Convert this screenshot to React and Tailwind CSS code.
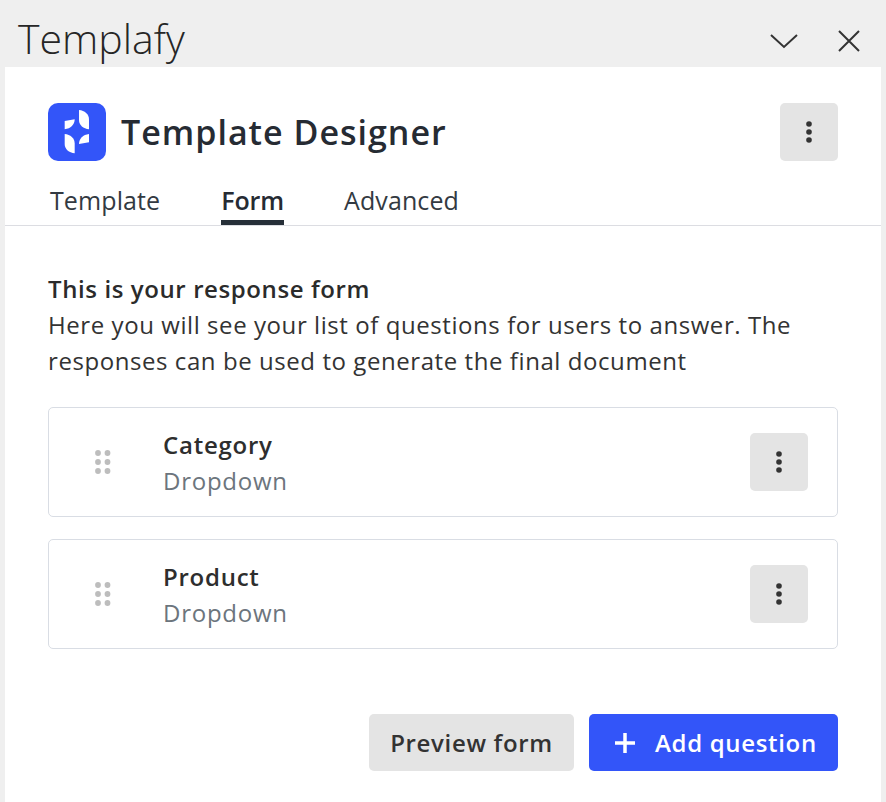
import React from "react";

const sans = "font-['Open_Sans',sans-serif]";

function Kebab() {
  return (
    <button className="w-[58px] h-[58px] rounded-[5px] bg-[#e4e4e4] flex items-center justify-center shrink-0">
      <svg width="8" height="24" viewBox="0 0 8 24" fill="#333">
        <circle cx="4" cy="4" r="2.8" />
        <circle cx="4" cy="12" r="2.8" />
        <circle cx="4" cy="20" r="2.8" />
      </svg>
    </button>
  );
}

function Grip() {
  return (
    <svg width="16" height="24" viewBox="0 0 16 24" fill="#bdbdbd" className="-mt-[1px]">
      {[3, 12, 21].map((y) => (
        <React.Fragment key={y}>
          <circle cx="3" cy={y} r="2.9" />
          <circle cx="12.5" cy={y} r="2.9" />
        </React.Fragment>
      ))}
    </svg>
  );
}

function Question({ name }) {
  return (
    <div className="h-[110px] rounded-[5px] border border-[#d9dde4] flex items-center pl-[46px] pr-[29px]">
      <Grip />
      <div className="ml-[52px] flex-1 pt-[1px]">
        <div className="text-[24px] leading-[36px] font-semibold tracking-[0.75px] text-[#2e2e2e]">{name}</div>
        <div className="text-[24px] leading-[36px] tracking-[0.75px] text-[#6c757d]">Dropdown</div>
      </div>
      <Kebab />
    </div>
  );
}

export default function App() {
  return (
    <div className={`${sans} w-[886px] h-[802px] bg-[#efefef] flex flex-col overflow-hidden`}>
      <div className="h-[67px] flex items-center pl-[18px] pr-[26px] shrink-0">
        <div className="flex-1 font-light text-[41px] leading-[48px] text-[#262626] mt-[8px]">Templafy</div>
        <svg width="28" height="16" viewBox="0 0 28 16" fill="none" stroke="#333" strokeWidth="2" className="mr-[40px] mt-[15px]">
          <path d="M1 2 L14 14 L27 2" />
        </svg>
        <svg width="22" height="22" viewBox="0 0 22 22" fill="none" stroke="#333" strokeWidth="2" className="mt-[15px]">
          <path d="M1 1 L21 21 M21 1 L1 21" />
        </svg>
      </div>
      <div className="mx-[5px] flex-1 bg-white flex flex-col">
        <div className="flex items-center pl-[43px] pr-[43px] pt-[36px]">
          <svg width="58" height="58" viewBox="12 9 174 174">
            <rect x="12" y="9" width="174" height="174" rx="30" fill="#3355f9" />
            <g fill="white">
              <path d="M105 30 C122 32 135 42 135 58 L135 88 C118 86 105 76 105 60 Z" />
              <path d="M62 63 L92 58 C92 74 80 86 62 88 Z" />
              <path d="M135 127 L105 132 C105 116 117 104 135 102 Z" />
              <path d="M92 160 C75 158 62 148 62 132 L62 102 C79 104 92 114 92 130 Z" />
            </g>
          </svg>
          <div className="flex-1 ml-[15px] text-[34px] leading-[46px] font-semibold tracking-[1px] text-[#262b33]">Template Designer</div>
          <Kebab />
        </div>
        <div className="mt-[16px] h-[49px] border-b border-[#dcdde2] flex pl-[45px] text-[25px] tracking-[0.1px] text-[#333a42]">
          <div className="pt-[5px] h-[49px]">Template</div>
          <div className="ml-[61px] pt-[5px] h-[48px] font-semibold tracking-[-0.1px] text-[#262b33] border-b-[5px] border-[#262f38]">Form</div>
          <div className="ml-[60px] pt-[5px] h-[49px]">Advanced</div>
        </div>
        <div className="px-[43px] pt-[45px] flex flex-col flex-1">
          <div className="text-[24px] leading-[36px] tracking-[0.57px] text-[#333]">
            <div className="font-semibold tracking-[0.6px] text-[#2b2b2b]">This is your response form</div>
            <div>Here you will see your list of questions for users to answer. The responses can be used to generate the final document</div>
          </div>
          <div className="mt-[28px] flex flex-col gap-[22px]">
            <Question name="Category" />
            <Question name="Product" />
          </div>
          <div className="mt-[65px] flex justify-end gap-[15px]">
            <button className="h-[57px] w-[205px] rounded-[5px] bg-[#e4e4e4] text-[24px] font-semibold tracking-[0.67px] text-[#333]">Preview form</button>
            <button className="h-[57px] w-[249px] rounded-[5px] bg-[#3355f9] text-[24px] font-semibold tracking-[0.67px] text-white flex items-center pl-[26px]">
              <svg width="20" height="20" viewBox="0 0 20 20" stroke="white" strokeWidth="3.5" className="mr-[20px]">
                <path d="M10 0 V20 M0 10 H20" />
              </svg>
              Add question
            </button>
          </div>
        </div>
      </div>
    </div>
  );
}
